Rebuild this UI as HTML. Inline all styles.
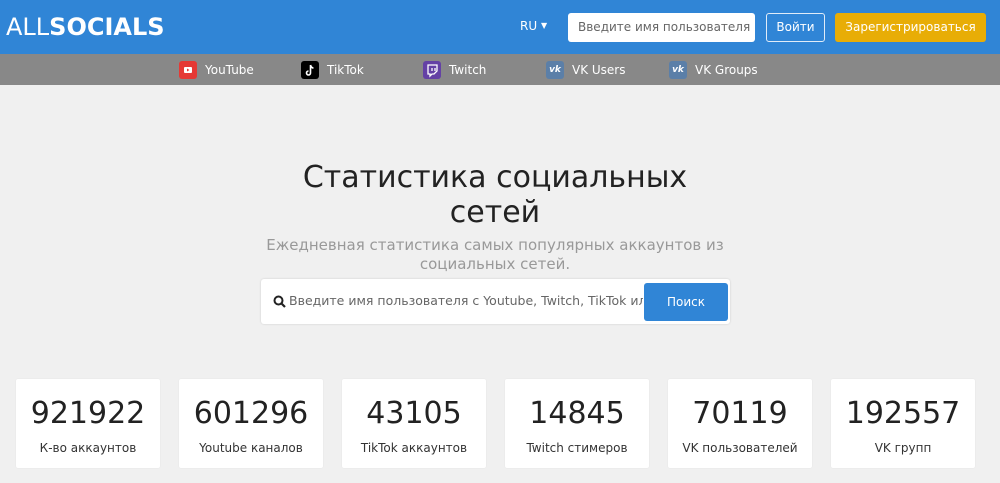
<!DOCTYPE html>
<html><head><meta charset="utf-8"><style>
*{box-sizing:border-box;margin:0;padding:0}
body{width:1000px;height:483px;overflow:hidden;background:#f0f0f0;font-family:"DejaVu Sans","Liberation Sans",sans-serif;position:relative}
.hdr{position:absolute;left:0;top:0;width:1000px;height:54px;background:#3085d6}
.logo{position:absolute;left:6px;top:13px;color:#fff;font-size:24px;letter-spacing:0}
.logo b{font-weight:bold}
.ru{position:absolute;left:520px;top:19px;color:#fff;font-size:12px}
.inp{position:absolute;left:568px;top:13px;width:187px;height:29px;background:#fff;border-radius:3px;font-size:12px;color:#666;padding:7px 10px;white-space:nowrap;overflow:hidden}
.login{position:absolute;left:766px;top:13px;width:59px;height:29px;border:1px solid #e0ecf8;border-radius:3px;color:#fff;font-size:12px;text-align:center;line-height:27px}
.reg{position:absolute;left:835px;top:13px;width:151px;height:29px;background:#e8ad06;border-radius:3px;color:#fff;font-size:12px;text-align:center;line-height:29px}
.nav{position:absolute;left:0;top:54px;width:1000px;height:31px;background:#888}
.ni{position:absolute;top:6px;color:#fff;font-size:12px;line-height:19px;white-space:nowrap}
.ni i{display:inline-block;width:18px;height:18px;border-radius:3px;vertical-align:top;margin-right:8px;position:relative}
h1{position:absolute;left:0;width:990px;top:160px;text-align:center;font-weight:normal;font-size:30px;line-height:35px;color:#222}
.sub{position:absolute;left:0;width:990px;top:236px;text-align:center;font-size:15px;line-height:19px;color:#999}
.sbox{position:absolute;left:261px;top:279px;width:469px;height:45px;background:#fff;border-radius:3px;box-shadow:0 0 2px rgba(0,0,0,.15)}
.sbox span{position:absolute;left:28px;top:14px;font-size:12.5px;color:#666;white-space:nowrap;width:354px;overflow:hidden}
.btn{position:absolute;left:383px;top:4px;width:84px;height:38px;background:#3085d6;border-radius:3px;color:#fff;font-size:12px;text-align:center;line-height:38px}
.card{position:absolute;top:379px;width:144px;height:89px;background:#fff;border-radius:2px;text-align:center;box-shadow:0 0 1px rgba(0,0,0,.1)}
.card .n{font-size:30px;color:#222;margin-top:17px;line-height:36px}
.card .l{font-size:12px;color:#333;margin-top:9px}
</style></head><body>
<div class="hdr">
<div class="logo">ALL<b>SOCIALS</b></div>
<div class="ru">RU <span style="font-size:8px;position:relative;top:-2px">▼</span></div>
<div class="inp">Введите имя пользователя</div>
<div class="login">Войти</div>
<div class="reg">Зарегистрироваться</div>
</div>
<div class="nav">
<div class="ni" style="left:179px;top:7px"><i style="background:#e53935"><svg width="18" height="18"><rect x="5" y="6" width="8" height="6" rx="1" fill="#fff"/><path d="M8 7.5l2.5 1.5-2.5 1.5z" fill="#e53935"/></svg></i>YouTube</div>
<div class="ni" style="left:301px;top:7px"><i style="background:#000"><svg width="18" height="18"><path d="M9.5 4v8a2 2 0 1 1-2-2M9.5 4c0.5 2 1.5 3 3 3" stroke="#fff" stroke-width="1.6" fill="none"/></svg></i>TikTok</div>
<div class="ni" style="left:423px;top:7px"><i style="background:#6441a5"><svg width="18" height="18"><path d="M5 4h9v6l-3 3H9l-2 2v-2H5z" stroke="#fff" stroke-width="1.3" fill="none"/><path d="M9 7v3M12 7v3" stroke="#fff" stroke-width="1.3"/></svg></i>Twitch</div>
<div class="ni" style="left:546px;top:7px"><i style="background:#5b7fa8;color:#fff;font-size:9px;font-weight:bold;text-align:center;line-height:18px">vk</i>VK Users</div>
<div class="ni" style="left:669px;top:7px"><i style="background:#5b7fa8;color:#fff;font-size:9px;font-weight:bold;text-align:center;line-height:18px">vk</i>VK Groups</div>
</div>
<h1>Статистика социальных<br>сетей</h1>
<div class="sub">Ежедневная статистика самых популярных аккаунтов из<br>социальных сетей.</div>
<div class="sbox"><svg style="position:absolute;left:12px;top:16px" width="13" height="13"><circle cx="5.5" cy="5.5" r="4" stroke="#222" stroke-width="2" fill="none"/><path d="M8.5 8.5l3.5 3.5" stroke="#222" stroke-width="2.2"/></svg><span>Введите имя пользователя с Youtube, Twitch, TikTok или VK</span><div class="btn">Поиск</div></div>
<div class="card" style="left:16px"><div class="n">921922</div><div class="l">К-во аккаунтов</div></div>
<div class="card" style="left:179px"><div class="n">601296</div><div class="l">Youtube каналов</div></div>
<div class="card" style="left:342px"><div class="n">43105</div><div class="l">TikTok аккаунтов</div></div>
<div class="card" style="left:505px"><div class="n">14845</div><div class="l">Twitch стимеров</div></div>
<div class="card" style="left:668px"><div class="n">70119</div><div class="l">VK пользователей</div></div>
<div class="card" style="left:831px"><div class="n">192557</div><div class="l">VK групп</div></div>
</body></html>
